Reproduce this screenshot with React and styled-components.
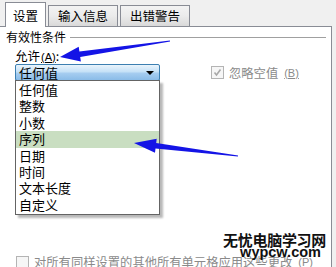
import React from "react";
import styled, { createGlobalStyle } from "styled-components";

const GlobalStyle = createGlobalStyle`
  html, body {
    margin: 0;
    padding: 0;
    background: #f0f0f0;
  }
  body {
    font-family: "Noto Sans CJK SC", "Liberation Sans", sans-serif;
    font-size: 12px;
    color: #000;
  }
`;

const Window = styled.div`
  position: relative;
  width: 336px;
  height: 267px;
  overflow: hidden;
  display: flex;
  flex-direction: column;
  background: #f0f0f0;
`;

const TabStrip = styled.div`
  height: 26px;
  display: flex;
  align-items: flex-end;
  gap: 2px;
  padding-left: 5px;
`;

const Tab = styled.div`
  position: relative;
  z-index: ${({ active }) => (active ? 2 : 1)};
  width: ${({ w }) => w}px;
  height: ${({ active }) => (active ? 25 : 21)}px;
  margin-bottom: ${({ active }) => (active ? -1 : 0)}px;
  box-sizing: border-box;
  border: 1px solid #898c95;
  border-bottom: none;
  background: ${({ active }) =>
    active ? "#fff" : "linear-gradient(#f3f3f3, #ebebeb 50%, #d9d9d9)"};
  display: flex;
  align-items: center;
  justify-content: center;
  font-size: 12.5px;
  line-height: 14px;
  padding-top: ${({ active }) => (active ? 1 : 0)}px;
`;

const Panel = styled.div`
  position: relative;
  flex: 1;
  display: flex;
  flex-direction: column;
  background: #fff;
  border-top: 1px solid #898c95;
  border-right: 1px solid #898c95;
  margin-right: 4px;
  padding: 2px 0 0 6px;
`;

const Group = styled.div`
  display: flex;
  align-items: center;
  gap: 4px;
  height: 14px;
  padding-right: 5px;
`;

const GroupLine = styled.div`
  flex: 1;
  height: 1px;
  margin-top: 3px;
  background: #a0a0a0;
`;

const Label = styled.div`
  margin: 6px 0 0 9px;
  height: 14px;
  line-height: 14px;
  font-size: 12.5px;
`;

const Key = styled.span`
  text-decoration: underline;
  text-underline-offset: 1px;
  font-family: "Liberation Sans", sans-serif;
  font-size: 11px;
  margin-left: 1px;
`;

const Row = styled.div`
  display: flex;
  align-items: center;
  margin: 1px 0 0 9px;
  gap: 51px;
`;

const Combo = styled.div`
  width: 145px;
  height: 17px;
  box-sizing: border-box;
  border: 1px solid #3c7fb1;
  border-radius: 2px;
  background: linear-gradient(#eaf4fc, #c5e1f7 45%, #a6cdf0 55%, #8abce8);
  display: flex;
  align-items: center;
  justify-content: space-between;
  padding: 0 5px 0 3px;
  font-size: 13px;
`;

const Caret = styled.span`
  width: 0;
  height: 0;
  border-left: 4px solid transparent;
  border-right: 4px solid transparent;
  border-top: 4px solid #000;
`;

const Check = styled.label`
  display: flex;
  align-items: center;
  gap: 5px;
  color: ${({ disabled }) => (disabled ? "#8a8a8a" : "#000")};
  font-size: 12.3px;
  line-height: 14px;
  white-space: nowrap;
`;

const Box = styled.span`
  width: 11px;
  height: 11px;
  border: 1px solid #b4b4b4;
  background: #f6f6f6;
  display: flex;
  align-items: center;
  justify-content: center;
  flex: none;
`;

const Spacer = styled.div`
  flex: 1;
`;

const Footer = styled.div`
  padding-left: 10px;
  margin-bottom: -2px;
`;

const List = styled.ul`
  position: absolute;
  left: 15px;
  top: 53px;
  z-index: 3;
  width: 145px;
  margin: 0;
  padding: 1px 0;
  list-style: none;
  box-sizing: border-box;
  border: 1px solid #646464;
  background: #fff;
  box-shadow: 3px 3px 2px rgba(0, 0, 0, 0.28);
`;

const Item = styled.li`
  height: 16.4px;
  line-height: 16.4px;
  padding-left: 3px;
  font-size: 13px;
  background: ${({ hot }) => (hot ? "#c9dec1" : "transparent")};
`;

const Arrows = styled.svg`
  position: absolute;
  left: 0;
  top: 0;
  z-index: 4;
  pointer-events: none;
`;

const Watermark = styled.div`
  position: absolute;
  right: 10px;
  bottom: 9px;
  z-index: 5;
  display: flex;
  flex-direction: column;
  align-items: center;
  font-weight: bold;
  color: #111;
  line-height: 12px;
`;

const MarkCn = styled.div`
  font-size: 15px;
  letter-spacing: -0.3px;
`;

const MarkEn = styled.div`
  font-family: "Liberation Sans", sans-serif;
  font-size: 14.5px;
  margin-left: 12px;
`;

const ITEMS = ["任何值", "整数", "小数", "序列", "日期", "时间", "文本长度", "自定义"];

// tapered arrow from tail to tip
const arrow = (tx, ty, px, py, headLen, headW, shaftW, tailW) => {
  const dx = px - tx;
  const dy = py - ty;
  const len = Math.hypot(dx, dy);
  const ux = dx / len;
  const uy = dy / len;
  const nx = -uy;
  const ny = ux;
  const bx = px - ux * headLen;
  const by = py - uy * headLen;
  const pts = [
    [tx + nx * tailW, ty + ny * tailW],
    [bx + nx * shaftW, by + ny * shaftW],
    [bx + nx * headW, by + ny * headW],
    [px, py],
    [bx - nx * headW, by - ny * headW],
    [bx - nx * shaftW, by - ny * shaftW],
    [tx - nx * tailW, ty - ny * tailW],
  ];
  return pts.map((p) => p.map((v) => v.toFixed(1)).join(",")).join(" ");
};

const App = () => {
  return (
    <>
      <GlobalStyle />
      <Window>
        <TabStrip>
          <Tab active w={41}>设置</Tab>
          <Tab w={70}>输入信息</Tab>
          <Tab w={70}>出错警告</Tab>
        </TabStrip>
        <Panel>
          <Group>
            有效性条件
            <GroupLine />
          </Group>
          <Label>
            允许<Key>(A)</Key>:
          </Label>
          <Row>
            <Combo>
              任何值
              <Caret />
            </Combo>
            <Check disabled>
              <Box>
                <svg width="9" height="9" viewBox="0 0 9 9">
                  <path d="M1.5 4.5 L3.5 7 L7.5 1.5" fill="none" stroke="#a8a8a8" strokeWidth="1.6" />
                </svg>
              </Box>
              忽略空值<Key>(B)</Key>
            </Check>
          </Row>
          <Spacer />
          <Footer>
            <Check disabled>
              <Box />
              对所有同样设置的其他所有单元格应用这些更改<Key>(P)</Key>
            </Check>
          </Footer>
          <List>
            {ITEMS.map((item) => (
              <Item key={item} hot={item === "序列"}>
                {item}
              </Item>
            ))}
          </List>
        </Panel>
        <Arrows width="336" height="267" viewBox="0 0 336 267">
          <polygon points={arrow(170, 41, 60, 57, 20, 7.5, 2.8, 0.5)} fill="#1414e6" />
          <polygon points={arrow(238, 156, 134, 143, 22, 7, 2.8, 0.5)} fill="#1414e6" />
        </Arrows>
        <Watermark>
          <MarkCn>无忧电脑学习网</MarkCn>
          <MarkEn>wypcw.com</MarkEn>
        </Watermark>
      </Window>
    </>
  );
};

export default App;
